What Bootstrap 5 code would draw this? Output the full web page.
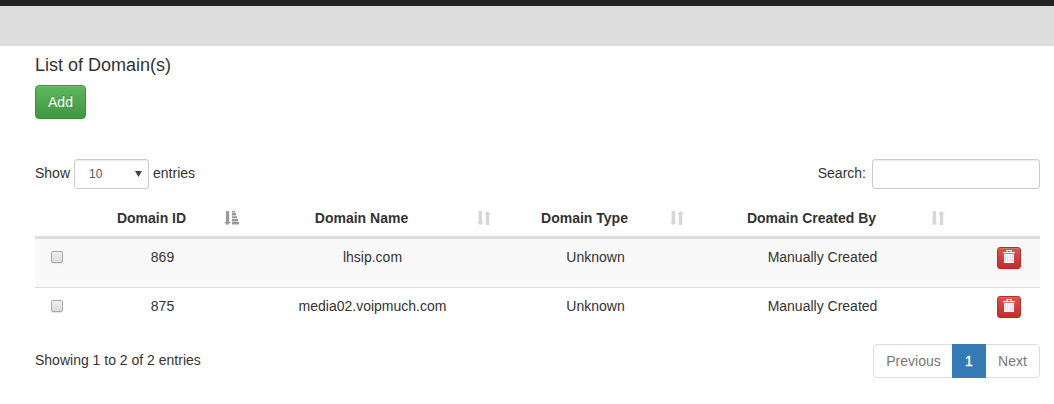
<!DOCTYPE html>
<html lang="en">
<head>
<meta charset="utf-8">
<title>List of Domain(s)</title>
<meta name="viewport" content="width=device-width, initial-scale=1">
<link href="https://cdn.jsdelivr.net/npm/bootstrap@5.3.0/dist/css/bootstrap.min.css" rel="stylesheet">
<style>
body{font-family:"Liberation Sans",Arial,sans-serif;font-size:14px;line-height:20px;color:#333;background:#fff;overflow:hidden}
.topbar{height:6px;background:#222}
.subbar{height:40px;background:#ddd}
.page{padding:8px 14px 0 35px}
.title{font-size:18px;line-height:22px;font-weight:400;margin:0 0 9px}
.btn-add{display:block;font-size:14px;line-height:20px;padding:6px 12px;width:51px;height:34px;border-radius:4px;color:#fff;border:1px solid #3e8f3e;background:linear-gradient(#5cb85c,#419641);text-shadow:0 -1px 0 rgba(0,0,0,.2);box-shadow:inset 0 1px 0 rgba(255,255,255,.15),0 1px 1px rgba(0,0,0,.075)}
.controls{margin-top:40px;height:30px}
.caption{padding-bottom:2px}
.form-select.length{width:75px;height:30px;margin:0 4px;padding:4px 14px;font-size:12px;line-height:20px;color:#555;border:1px solid #ccc;border-radius:3px;background:#fff;box-shadow:inset 0 1px 1px rgba(0,0,0,.075)}
.arrow{position:absolute;right:11px;top:12px;pointer-events:none}
.form-control.search{width:168px;height:30px;margin-left:6px;border:1px solid #ccc;border-radius:3px;box-shadow:inset 0 1px 1px rgba(0,0,0,.075)}
.table.domains{table-layout:fixed;width:1005px;margin:11px 0 8px;font-size:14px;line-height:20px;--bs-table-color:#333;--bs-table-bg:#fff;color:#333;border-collapse:separate;border-spacing:0}
.domains>thead>tr>th{position:relative;height:39px;padding:8px 30px 8px 8px;border:0;border-bottom:3px solid #ddd;text-align:center}
.domains>tbody>tr>td{height:48px;padding:8px;border:0;text-align:center;color:#333;vertical-align:top;box-shadow:none}
.domains>tbody>tr:first-child>td{background:#f9f9f9}
.domains>tbody>tr+tr>td{height:49px;border-top:1px solid #ddd}
.sort{position:absolute;right:8px;top:11px;fill:#d6d6d6}
.sort.on{right:7px;fill:#999}
.form-check-input.pick{display:block;width:12px;height:12px;margin:4px auto 0 8px;float:none;border:1px solid #a9a9a9;border-radius:2px;background:linear-gradient(#eee,#dcdcdc);box-shadow:0 1px 1px #e4e4e4}
.domains>tbody>tr>td.action{padding-left:44px;text-align:left}
.btn-del{display:block;width:24px;height:22px;padding:0;line-height:0;border:1px solid #b92c28;border-radius:3px;background:linear-gradient(#d9534f,#c12e2a);box-shadow:inset 0 1px 0 rgba(255,255,255,.15),0 1px 1px rgba(0,0,0,.075)}
.btn-del svg{display:block;margin:-2px 0 0 5px}
.foot-row{height:34px}
.info{padding-bottom:2px}
.pagination{--bs-pagination-font-size:14px;--bs-pagination-padding-x:12px;--bs-pagination-padding-y:6px;--bs-pagination-color:#777;--bs-pagination-disabled-color:#777;--bs-pagination-disabled-bg:#fff;--bs-pagination-border-color:#ddd;--bs-pagination-disabled-border-color:#ddd;--bs-pagination-border-radius:4px;--bs-pagination-active-bg:#337ab7;--bs-pagination-active-border-color:#337ab7}
.page-link{line-height:20px;text-align:center}
.active>.page-link{width:34px;-webkit-text-stroke:.35px #fff}
.first>.page-link{width:80px;padding-right:11px}
.last>.page-link{width:55px;padding-left:11px;padding-right:11px}
</style>
</head>
<body>
<svg class="d-none">
  <symbol id="both" viewBox="0 0 14 14"><path d="M1.600 0H5v11h2L3.300 14.200 0 11h1.600zM8.800 14V3.200H7L10.500 0 14 3.200h-1.800V14z"/></symbol>
  <symbol id="asc" viewBox="0 0 15 14"><path d="M2 0h3v11h2l-3.500 3.200L0 11h2zM8 0h3v1.600H8zM8 2h4v2.400H8zM8 5.200h5v2H8zM8 8h6v2.400H8zM8 11h7v2.500H8z"/></symbol>
  <symbol id="trash" viewBox="0 0 12 14"><path d="M3.500 2V0h5.500v2H12v1.300H0V2zM5 1v1h2.500V1z" fill="#fff" fill-rule="evenodd"/><path d="M1 4h10v9H1z" fill="#fff"/><path d="M2.500 5v7M4.800 5v7M7.200 5v7M9.500 5v7" stroke="#e3cbea" stroke-width="1"/></symbol>
</svg>
<div class="topbar"></div>
<div class="subbar"></div>
<main class="page">
  <h4 class="title">List of Domain(s)</h4>
  <button class="btn btn-success btn-add" type="button">Add</button>
  <div class="controls d-flex justify-content-between">
    <label class="d-flex align-items-center"><span class="caption">Show</span>
      <span class="position-relative"><select class="form-select length"><option>10</option></select>
      <svg class="arrow" width="7" height="6" viewBox="0 0 7 6"><path d="M0 0h7L3.500 6z" fill="#444"/></svg></span>
      <span class="caption">entries</span></label>
    <label class="d-flex align-items-center"><span class="caption">Search:</span><input type="search" class="form-control search"></label>
  </div>
  <table class="table domains">
    <colgroup><col style="width:44px"><col style="width:167px"><col style="width:253px"><col style="width:193px"><col style="width:261px"><col style="width:87px"></colgroup>
    <thead><tr>
      <th></th>
      <th>Domain ID<svg class="sort on" width="15" height="14"><use href="#asc"/></svg></th>
      <th>Domain Name<svg class="sort" width="14" height="14"><use href="#both"/></svg></th>
      <th>Domain Type<svg class="sort" width="14" height="14"><use href="#both"/></svg></th>
      <th>Domain Created By<svg class="sort" width="14" height="14"><use href="#both"/></svg></th>
      <th></th>
    </tr></thead>
    <tbody>
      <tr><td><input class="form-check-input pick" type="checkbox"></td><td>869</td><td>lhsip.com</td><td>Unknown</td><td>Manually Created</td><td class="action"><button class="btn btn-danger btn-del" type="button" aria-label="Delete"><svg width="12" height="14"><use href="#trash"/></svg></button></td></tr>
      <tr><td><input class="form-check-input pick" type="checkbox"></td><td>875</td><td>media02.voipmuch.com</td><td>Unknown</td><td>Manually Created</td><td class="action"><button class="btn btn-danger btn-del" type="button" aria-label="Delete"><svg width="12" height="14"><use href="#trash"/></svg></button></td></tr>
    </tbody>
  </table>
  <div class="foot-row d-flex justify-content-between align-items-center">
    <div class="info">Showing 1 to 2 of 2 entries</div>
    <ul class="pagination mb-0">
      <li class="page-item disabled first"><a class="page-link">Previous</a></li>
      <li class="page-item active"><a class="page-link" href="#">1</a></li>
      <li class="page-item disabled last"><a class="page-link">Next</a></li>
    </ul>
  </div>
</main>
<script src="https://cdn.jsdelivr.net/npm/bootstrap@5.3.0/dist/js/bootstrap.bundle.min.js"></script>
</body>
</html>
